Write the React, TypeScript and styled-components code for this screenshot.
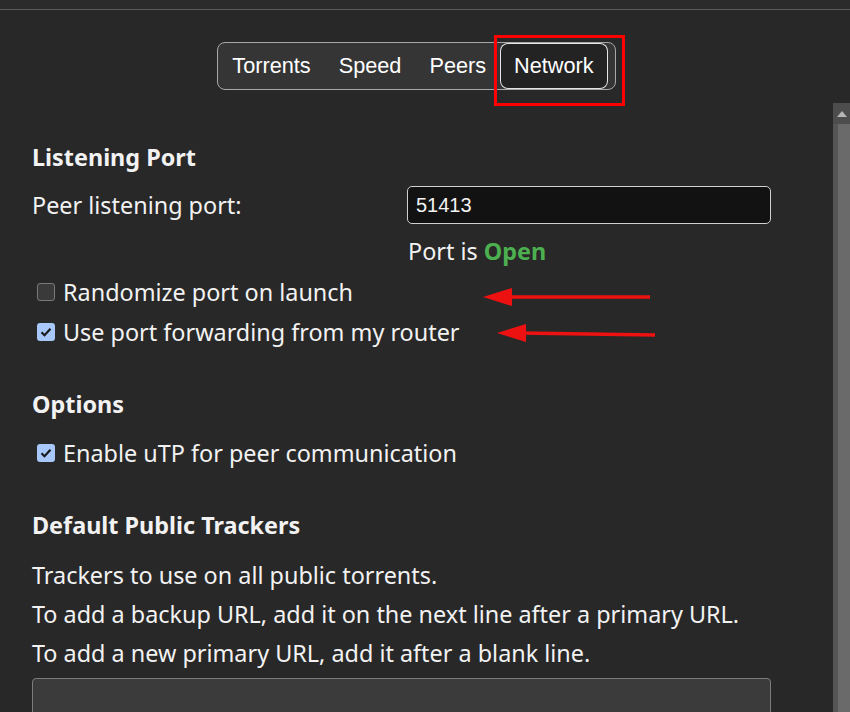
import styled, { createGlobalStyle } from "styled-components";

const GlobalStyle = createGlobalStyle`
    html, body {
        margin: 0;
        padding: 0;
        background: #282828;
        overflow: hidden;
    }
    body {
        font-family: "Noto Sans", "Open Sans", sans-serif;
        color: #f2f2f2;
    }
`;

const Page = styled.div`
    position: relative;
    width: 850px;
    height: 712px;
    display: flex;
    flex-direction: column;
    overflow: hidden;
`;

const TopStrip = styled.div`
    height: 9px;
    background: #2b2b2b;
    border-bottom: 1px solid #5c5c5c;
`;

const Header = styled.div`
    display: flex;
    justify-content: center;
    padding: 32px 17px 0 0;
    height: 61px;
`;

const TabBar = styled.div`
    display: flex;
    align-items: stretch;
    height: 46px;
    padding: 0 7px 0 0;
    border: 1px solid #a8a8a8;
    border-radius: 8px;
    background: #353535;
`;

const Tab = styled.div<{ $active?: boolean }>`
    display: flex;
    align-items: center;
    padding: 0 14px;
    font-family: "Liberation Sans", Arial, sans-serif;
    font-size: 21.7px;
    color: #fff;
    border-radius: 8px;
    ${(p) =>
        p.$active &&
        `
        background: #232323;
        box-shadow: inset 0 0 0 1px #e6e6e6;
    `}
`;

const Body = styled.div`
    flex: 1;
    display: flex;
    min-height: 0;
`;

const Content = styled.div`
    flex: 1;
    padding: 39px 0 0 32px;
    font-size: 23.4px;
    line-height: 30px;
`;

const Section = styled.section<{ $gap: number }>`
    margin-bottom: ${(p) => p.$gap}px;
`;

const SectionTitle = styled.h3`
    margin: 0;
    font-size: 23.4px;
    font-weight: 700;
    line-height: 30px;
`;

const FieldRow = styled.div`
    display: grid;
    grid-template-columns: 375px 364px;
    align-items: center;
    margin-top: 14px;
`;

const PortInput = styled.input`
    box-sizing: border-box;
    width: 364px;
    height: 38px;
    padding: 0 8px;
    background: #121212;
    border: 1px solid #d0d0d0;
    border-radius: 5px;
    color: #f4f4f4;
    font-family: "Liberation Sans", Arial, sans-serif;
    font-size: 20px;
    outline: none;
`;

const PortStatus = styled.div`
    margin: 12px 0 0 376px;
`;

const OpenText = styled.span`
    color: #4caf50;
    font-weight: 700;
`;

const CheckRow = styled.label<{ $top: number }>`
    display: flex;
    align-items: center;
    gap: 8px;
    margin-top: ${(p) => p.$top}px;
    padding-left: 5px;
`;

const Box = styled.span<{ $checked?: boolean }>`
    box-sizing: border-box;
    width: 18px;
    height: 18px;
    border-radius: 3px;
    display: inline-flex;
    align-items: center;
    justify-content: center;
    background: ${(p) => (p.$checked ? "#a8c7fa" : "#3a3a3a")};
    border: ${(p) => (p.$checked ? "none" : "1px solid #7a7a7a")};
`;

const Note = styled.p<{ $top: number }>`
    margin: ${(p) => p.$top}px 0 0;
`;

const TrackerBox = styled.textarea`
    display: block;
    box-sizing: border-box;
    width: 739px;
    height: 120px;
    margin-top: 10px;
    background: #3b3b3b;
    border: 1px solid #7c7c7c;
    border-radius: 4px;
    resize: none;
`;

const Scrollbar = styled.div`
    width: 17px;
    display: flex;
    flex-direction: column;
    background: #6a6a6a;
    border-left: 5px solid #555;
    box-sizing: border-box;
`;

const ScrollButton = styled.div`
    height: 21px;
    background: #4d4d4d;
    margin-left: -5px;
    display: flex;
    align-items: center;
    justify-content: center;
`;

const Highlight = styled.div`
    position: absolute;
    left: 494px;
    top: 35px;
    width: 125px;
    height: 65px;
    border: 3px solid #ff0000;
`;

const Arrows = styled.svg`
    position: absolute;
    left: 0;
    top: 0;
    pointer-events: none;
`;

const Check = () => (
    <svg width="12" height="10" viewBox="0 0 12 10">
        <path d="M1.5 5.2 L4.5 8.2 L10.5 1.8" fill="none" stroke="#1b1b1b" strokeWidth="2.2" />
    </svg>
);

const CheckItem = ({ label, checked, top }: { label: string; checked?: boolean; top: number }) => (
    <CheckRow $top={top}>
        <Box $checked={checked}>{checked && <Check />}</Box>
        {label}
    </CheckRow>
);

const App = () => {
    return (
        <Page>
            <GlobalStyle />
            <TopStrip />
            <Header>
                <TabBar>
                    <Tab>Torrents</Tab>
                    <Tab>Speed</Tab>
                    <Tab>Peers</Tab>
                    <Tab $active>Network</Tab>
                </TabBar>
            </Header>
            <Body>
                <Content>
                    <Section $gap={42}>
                        <SectionTitle>Listening Port</SectionTitle>
                        <FieldRow>
                            <span>Peer listening port:</span>
                            <PortInput defaultValue="51413" />
                        </FieldRow>
                        <PortStatus>
                            Port is <OpenText>Open</OpenText>
                        </PortStatus>
                        <CheckItem label="Randomize port on launch" top={11} />
                        <CheckItem label="Use port forwarding from my router" checked top={10} />
                    </Section>
                    <Section $gap={42}>
                        <SectionTitle>Options</SectionTitle>
                        <CheckItem label="Enable uTP for peer communication" checked top={19} />
                    </Section>
                    <Section $gap={0}>
                        <SectionTitle>Default Public Trackers</SectionTitle>
                        <Note $top={20}>Trackers to use on all public torrents.</Note>
                        <Note $top={9}>To add a backup URL, add it on the next line after a primary URL.</Note>
                        <Note $top={9}>To add a new primary URL, add it after a blank line.</Note>
                        <TrackerBox />
                    </Section>
                </Content>
                <Scrollbar>
                    <ScrollButton>
                        <svg width="10" height="6" viewBox="0 0 10 6">
                            <path d="M0 6 L5 0 L10 6 Z" fill="#b5b5b5" />
                        </svg>
                    </ScrollButton>
                </Scrollbar>
            </Body>
            <Highlight />
            <Arrows width="850" height="712">
                <line x1="650" y1="297" x2="505" y2="297" stroke="#ee1111" strokeWidth="3.5" />
                <path d="M483 297 L512 288 L512 306 Z" fill="#ee1111" />
                <line x1="655" y1="335" x2="520" y2="333" stroke="#ee1111" strokeWidth="3.5" />
                <path d="M497 333 L526 324 L526 342 Z" fill="#ee1111" />
            </Arrows>
        </Page>
    );
};

export default App;
